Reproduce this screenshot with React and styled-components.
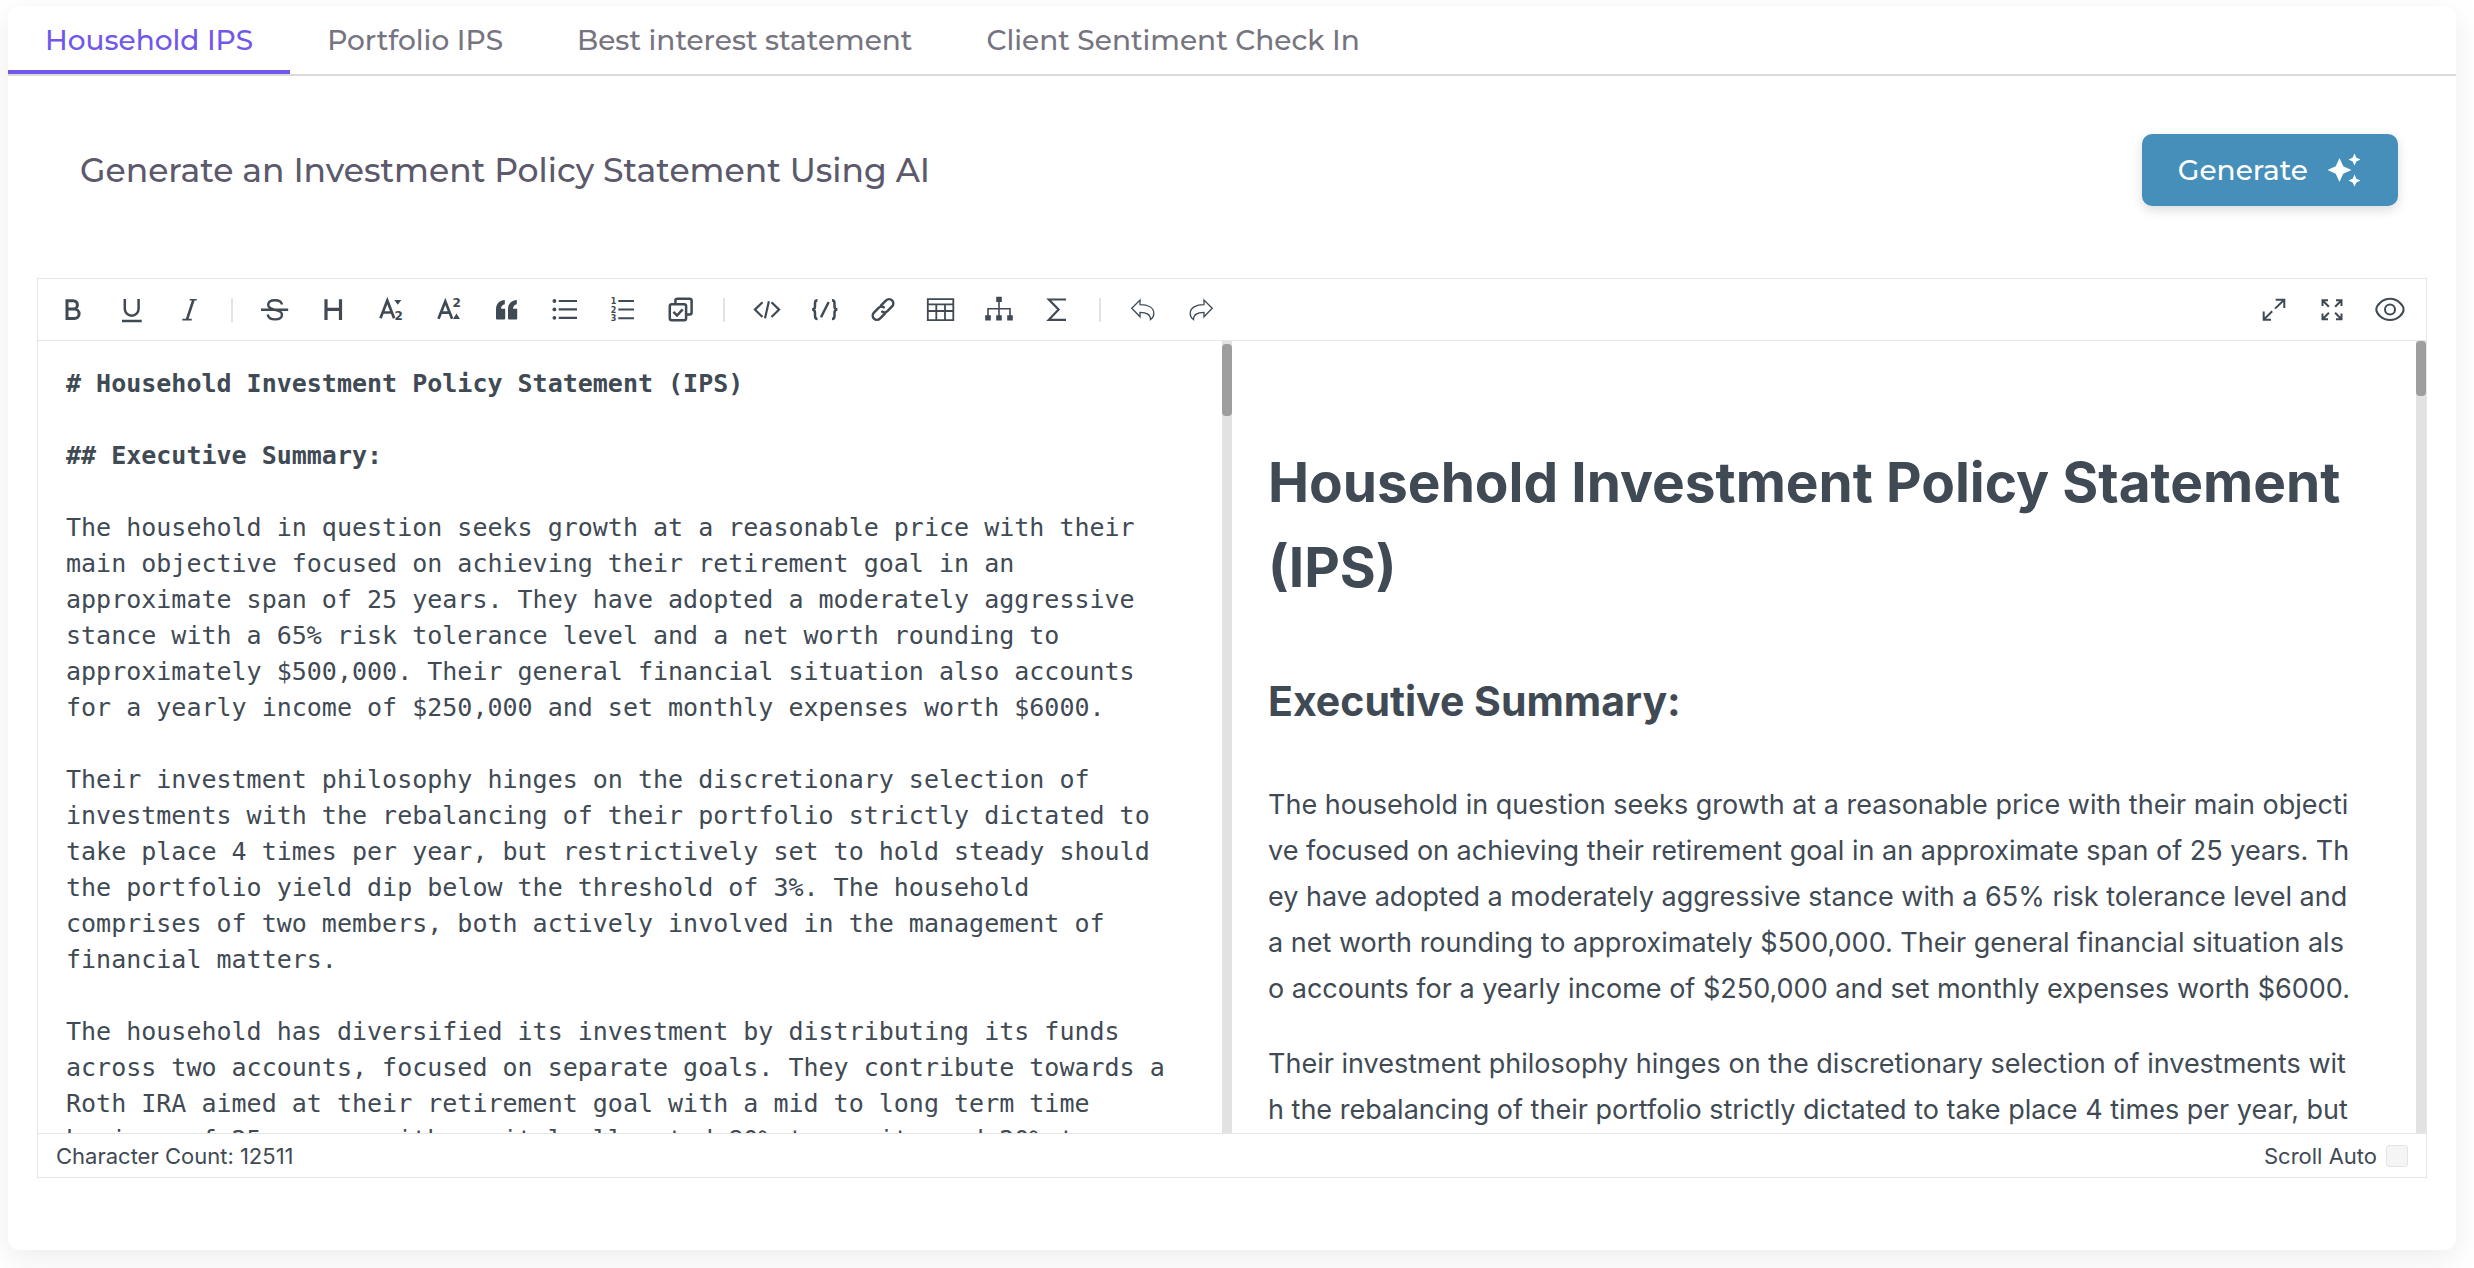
import React, { useState } from "react";
import styled, { createGlobalStyle } from "styled-components";

const brandFont = `"Montserrat", "DejaVu Sans", sans-serif`;
const uiFont = `"Inter", "Liberation Sans", sans-serif`;
const codeFont = `"DejaVu Sans Mono", "Liberation Mono", monospace`;

const color = {
  ink: "#3f4a54",
  line: "#e6e6e6",
  track: "#e2e2e2",
  thumb: "#9e9e9e",
  accent: "#7158ea",
  action: "#458fba",
};

const GlobalStyle = createGlobalStyle`
  * { box-sizing: border-box; }
  body { margin: 0; background: #ffffff; }
  button { font: inherit; color: inherit; background: none; border: 0; padding: 0; cursor: pointer; }
`;

const Page = styled.div`
  padding: 6px 18px 18px 8px;
  overflow: hidden;
`;

const Card = styled.main`
  background: #ffffff;
  border-radius: 12px;
  box-shadow: 0 8px 32px rgba(0, 0, 0, 0.08);
  padding-bottom: 72px;
`;

const Tabs = styled.div`
  display: flex;
  border-bottom: 2px solid #dbdbdb;
`;

const Tab = styled.button`
  && {
    height: 68px;
    padding: 4px 37px 0;
    font: 500 28px/36px ${brandFont};
    white-space: nowrap;
    color: ${(p) => (p.$active ? color.accent : "#76747f")};
    border-bottom: 4px solid ${(p) => (p.$active ? color.accent : "transparent")};
  }
`;

const Header = styled.header`
  display: flex;
  align-items: center;
  justify-content: space-between;
  padding: 58px 58px 72px 72px;
`;

const Title = styled.h1`
  margin: 0;
  font: 500 33px/48px ${brandFont};
  color: #5b596b;
`;

const GenerateButton = styled.button`
  && {
    display: flex;
    align-items: center;
    gap: 18px;
    height: 72px;
    padding: 0 36px;
    border-radius: 10px;
    background: ${color.action};
    color: #ffffff;
    font: 500 28px/36px ${brandFont};
    box-shadow: 0 4px 12px rgba(0, 0, 0, 0.14);
  }
`;

const Editor = styled.section`
  display: flex;
  flex-direction: column;
  height: 900px;
  margin: 0 29px;
  border: 1px solid ${color.line};
  color: ${color.ink};
`;

const Toolbar = styled.div`
  display: flex;
  justify-content: space-between;
  padding: 0 7px 0 6px;
  border-bottom: 1px solid ${color.line};
`;

const ToolGroup = styled.div`
  display: flex;
  align-items: center;
`;

const Tool = styled.button`
  display: grid;
  place-items: center;
  width: 58px;
  height: 61px;
`;

const Divider = styled.span`
  width: 2px;
  height: 24px;
  margin: 0 13px;
  background: #e3e3e3;
`;

const Panes = styled.div`
  flex: 1;
  min-height: 0;
  display: grid;
  grid-template-columns: 1fr 1fr;
`;

const Pane = styled.div`
  display: flex;
  min-width: 0;
  min-height: 0;
`;

const Source = styled.div`
  flex: 1;
  min-width: 0;
  overflow: hidden;
  padding: 25px 50px 0 28px;
  font: 400 25px/36px ${codeFont};
  white-space: pre-wrap;
  outline: none;
`;

const SourceLine = styled.div`
  min-height: 36px;
  margin-bottom: 36px;
  font-weight: ${(p) => (p.$heading ? 700 : 400)};
`;

const Track = styled.div`
  flex: none;
  width: 10px;
  padding-top: ${(p) => p.$inset}px;
  background: ${color.track};
`;

const Thumb = styled.div`
  height: ${(p) => p.$length}px;
  border-radius: 4px;
  background: ${color.thumb};
`;

const Preview = styled.article`
  flex: 1;
  min-width: 0;
  overflow: hidden;
  padding: 99px 65px 0 36px;
  font: 400 27px/46px ${uiFont};

  h1 {
    margin: 0 0 59px;
    font-size: 55px;
    line-height: 85px;
    font-weight: 700;
  }
  h2 {
    margin: 0 0 48px;
    font-size: 41px;
    line-height: 65px;
    font-weight: 700;
  }
  p {
    margin: 0 0 29px;
    word-break: break-all;
  }
`;

const Footer = styled.footer`
  display: flex;
  align-items: center;
  justify-content: space-between;
  height: 44px;
  padding: 0 18px;
  border-top: 1px solid ${color.line};
  font: 400 22px/32px ${uiFont};
`;

const ScrollAuto = styled.label`
  display: flex;
  align-items: center;
  gap: 9px;
`;

const Checkbox = styled.input`
  appearance: none;
  width: 22px;
  height: 22px;
  margin: 0;
  border: 1px solid #e4e4e4;
  border-radius: 3px;
  background: #f5f5f5;
`;

const IconSvg = styled.svg`
  display: block;
  fill: none;
  stroke: currentColor;
  stroke-width: ${(p) => p.$weight || 2};

  .solid {
    fill: currentColor;
    stroke: none;
  }
  text {
    fill: currentColor;
    stroke: none;
    font-family: "DejaVu Sans", sans-serif;
    font-weight: 700;
  }
`;

const Icon = ({ weight, children }) => (
  <IconSvg $weight={weight} width="32" height="32" viewBox="0 0 32 32" aria-hidden="true">
    {children}
  </IconSvg>
);

const icons = {
  bold: (
    <Icon weight={3}>
      <path d="M10 6.7h6.2a4.2 4.2 0 0 1 0 8.4H10zM10 15.1h7.4a4.7 4.7 0 0 1 0 9.4H10z" />
    </Icon>
  ),
  underline: (
    <Icon weight={2.5}>
      <path d="M9.8 5v9.8a6.9 6.9 0 0 0 13.8 0V5M7 26.9h19.7" />
    </Icon>
  ),
  italic: (
    <Icon weight={1.6}>
      <path d="M16.7 5.8h7M9.300 25.600h9.400" />
      <path strokeWidth="2.6" d="M20.400 6l-6.400 19.400" />
    </Icon>
  ),
  strike: (
    <Icon weight={2.4}>
      <path d="M2 15.700h27.200M23 10.400C22.300 7.400 19.800 6.200 16.200 6.200 12 6.200 9.200 8 9.200 10.800c0 2.700 2.300 4 6.800 5 5 1 7 2.500 7 5 0 3.100-2.800 4.600-6.800 4.600-4.300 0-7-1.600-7.500-4.900" />
    </Icon>
  ),
  heading: (
    <Icon weight={3.2}>
      <path d="M9 5.300V26M23.500 5.300V26M9 15.300h14.500" />
    </Icon>
  ),
  sub: (
    <Icon weight={2.7}>
      <path d="M5.500 24.300L12.300 6.500l6.800 17.800M7.800 18.500h9" />
      <path className="solid" d="M19.300 6h7l-3.500 4.700z" />
      <text x="19.500" y="26" fontSize="12">2</text>
    </Icon>
  ),
  sup: (
    <Icon weight={2.7}>
      <path d="M5.500 24.700L12.300 7.500l6.800 17.200M7.800 18.700h9" />
      <path className="solid" d="M20 25h7l-3.500-5.500z" />
      <text x="19.500" y="13.200" fontSize="12">2</text>
    </Icon>
  ),
  quote: (
    <Icon>
      <path className="solid" d="M5 24.500V15.500C5 10 8 6.400 13.800 6v4.200c-2.400.4-3.600 1.800-3.800 4.600h4.200v9.700a.9.900 0 0 1-.9.900H5.900a.9.900 0 0 1-.9-.9zM17 24.500V15.500C17 10 20 6.400 25.800 6v4.200c-2.400.4-3.600 1.800-3.800 4.600h4.200v9.700a.9.900 0 0 1-.9.900h-7.400a.9.900 0 0 1-.9-.9z" />
    </Icon>
  ),
  bullets: (
    <Icon weight={2.2}>
      <path d="M9.700 7h18.300M9.700 15.400h18.300M9.700 23.800h18.300" />
      <circle className="solid" cx="5.400" cy="7" r="1.900" />
      <circle className="solid" cx="5.400" cy="15.400" r="1.900" />
      <circle className="solid" cx="5.400" cy="23.800" r="1.900" />
    </Icon>
  ),
  numbers: (
    <Icon>
      <path d="M11.300 7H27M11.300 15.600H27M11.300 24.200H27" />
      <text x="3.800" y="10" fontSize="8">1</text>
      <text x="3.800" y="18.600" fontSize="8">2</text>
      <text x="3.800" y="27.200" fontSize="8">3</text>
    </Icon>
  ),
  task: (
    <Icon weight={2.5}>
      <rect x="4.800" y="10.300" width="16.300" height="16" rx="2" />
      <path d="M10.400 9.500V6.800a2 2 0 0 1 2-2h12.200a2 2 0 0 1 2 2v11.700a2 2 0 0 1-2 2H22" />
      <path d="M8.400 17.900l3.600 3.600 5.700-6.200" />
    </Icon>
  ),
  code: (
    <Icon weight={2.2}>
      <path d="M11.500 8.200L3.900 15.600l7.600 7.400M20.500 8.200l7.600 7.400-7.600 7.400M17.900 7.300L14 24.200" />
    </Icon>
  ),
  braces: (
    <Icon weight={2.5}>
      <path d="M8.500 6.300C6.300 6.300 6 7.300 6 9.200v3.300c0 2-.8 2.900-2.800 3.100 2 .2 2.800 1.100 2.800 3.100V22c0 2 .3 3 2.500 3M23 6.300c2.200 0 2.500 1 2.500 2.900v3.300c0 2 .8 2.900 2.800 3.100-2 .2-2.800 1.100-2.800 3.100V22c0 2-.3 3-2.500 3M19.700 8L12 23.300" />
    </Icon>
  ),
  link: (
    <Icon weight={2.5}>
      <g transform="translate(16 15.500) rotate(-45)" strokeLinecap="round">
        <path d="M1.500-4.200H8.600a4.200 4.200 0 0 1 0 8.400H2a4.200 4.200 0 0 1-4.100-3.200" />
        <path d="M-1.500 4.200H-8.600a4.200 4.200 0 0 1 0-8.400H-2a4.200 4.200 0 0 1 4.100 3.200" />
      </g>
    </Icon>
  ),
  table: (
    <Icon weight={1.8}>
      <path d="M2.800 5.200h25.500v20.900H2.800zM2.800 10.300h25.500M2.800 17h25.500M11.300 10.300v15.800M20 10.300v15.800" />
    </Icon>
  ),
  diagram: (
    <Icon weight={1.6}>
      <path d="M16 7v15M5 22v-7.300h22V22" />
      <path className="solid" d="M13.200 2.700h5.600v5.200h-5.600zM2.200 21.300h5.600v5.200H2.200zM13.200 21.300h5.600v5.200h-5.600zM24.200 21.300h5.600v5.200h-5.600z" />
    </Icon>
  ),
  sigma: (
    <Icon weight={2.2}>
      <path d="M25 5.500H7.800L17.600 15.600 7.800 25.800H25" />
    </Icon>
  ),
  undo: (
    <Icon weight={1.3}>
      <path d="M4.800 14.300L13 6v4.700c8 0 13.800 3 13.800 8.800 0 2.500-1.300 4.600-3.300 6.100 0-5-3.500-7.300-10.500-7.300v4.500z" />
    </Icon>
  ),
  redo: (
    <Icon weight={1.3}>
      <path d="M27.200 14.300L19 6v4.700c-8 0-13.800 3-13.800 8.800 0 2.500 1.300 4.600 3.300 6.100 0-5 3.500-7.300 10.500-7.300v4.500z" />
    </Icon>
  ),
  expand: (
    <Icon>
      <path d="M17.700 5.700h8.600v8.300M26 6l-9 8.600M13 25.700H5.700v-8.300M6 25.400l8.200-8.200" />
    </Icon>
  ),
  fullscreen: (
    <Icon>
      <path d="M12 6.300H6.500v5.800M6.700 6.500l6.200 6.200M20 6.300h5.500v5.800M25.300 6.500l-6.200 6.200M12 25.200H6.500v-5.800M6.700 25l6.200-6.200M20 25.200h5.500v-5.800M25.300 25l-6.200-6.200" />
    </Icon>
  ),
  eye: (
    <Icon>
      <path d="M2.300 15.400C2.300 11.500 8 4.800 16 4.800s13.600 6.700 13.600 10.600S24 26 16 26 2.300 19.300 2.300 15.400z" />
      <circle cx="16" cy="15.400" r="5" />
    </Icon>
  ),
};

const Sparkles = () => (
  <svg width="36" height="36" viewBox="0 0 24 24" fill="currentColor" aria-hidden="true">
    <path d="M19 9l1.250-2.750L23 5l-2.750-1.250L19 1l-1.250 2.750L15 5l2.750 1.250zM11.500 9.500L9 4 6.500 9.500 1 12l5.500 2.500L9 20l2.500-5.500L17 12zM19 15l-1.250 2.750L15 19l2.750 1.250L19 23l1.250-2.750L23 19l-2.750-1.250z" />
  </svg>
);

const toolGroups = [
  [["bold", "Bold"], ["underline", "Underline"], ["italic", "Italic"]],
  [
    ["strike", "Strikethrough"],
    ["heading", "Heading"],
    ["sub", "Subscript"],
    ["sup", "Superscript"],
    ["quote", "Quote"],
    ["bullets", "Unordered list"],
    ["numbers", "Ordered list"],
    ["task", "Task list"],
  ],
  [
    ["code", "Inline code"],
    ["braces", "Block-level code"],
    ["link", "Link"],
    ["table", "Table"],
    ["diagram", "Mermaid"],
    ["sigma", "Formula"],
  ],
  [["undo", "Undo"], ["redo", "Redo"]],
];

const viewTools = [
  ["expand", "Fullscreen in page"],
  ["fullscreen", "Fullscreen"],
  ["eye", "Preview"],
];

const tabs = ["Household IPS", "Portfolio IPS", "Best interest statement", "Client Sentiment Check In"];

const summary =
  "The household in question seeks growth at a reasonable price with their main objective focused on achieving their retirement goal in an approximate span of 25 years. They have adopted a moderately aggressive stance with a 65% risk tolerance level and a net worth rounding to approximately $500,000. Their general financial situation also accounts for a yearly income of $250,000 and set monthly expenses worth $6000.";
const philosophy =
  "Their investment philosophy hinges on the discretionary selection of investments with the rebalancing of their portfolio strictly dictated to take place 4 times per year, but restrictively set to hold steady should the portfolio yield dip below the threshold of 3%. The household comprises of two members, both actively involved in the management of financial matters.";
const accounts =
  "The household has diversified its investment by distributing its funds across two accounts, focused on separate goals. They contribute towards a Roth IRA aimed at their retirement goal with a mid to long term time horizon of 25 years, with capital allocated 80% to equity and 20% to";

const ToolButton = ({ tool: [name, label] }) => (
  <Tool type="button" aria-label={label}>
    {icons[name]}
  </Tool>
);

export default function App() {
  const [active, setActive] = useState(0);

  return (
    <Page>
      <GlobalStyle />
      <Card>
        <Tabs role="tablist">
          {tabs.map((label, i) => (
            <Tab key={label} type="button" role="tab" aria-selected={i === active} $active={i === active} onClick={() => setActive(i)}>
              {label}
            </Tab>
          ))}
        </Tabs>

        <Header>
          <Title>Generate an Investment Policy Statement Using AI</Title>
          <GenerateButton type="button">
            Generate
            <Sparkles />
          </GenerateButton>
        </Header>

        <Editor>
          <Toolbar role="toolbar">
            <ToolGroup>
              {toolGroups.map((group, i) => (
                <React.Fragment key={i}>
                  {i > 0 && <Divider />}
                  {group.map((tool) => (
                    <ToolButton key={tool[0]} tool={tool} />
                  ))}
                </React.Fragment>
              ))}
            </ToolGroup>
            <ToolGroup>
              {viewTools.map((tool) => (
                <ToolButton key={tool[0]} tool={tool} />
              ))}
            </ToolGroup>
          </Toolbar>

          <Panes>
            <Pane>
              <Source role="textbox" aria-multiline="true" aria-label="Markdown source" contentEditable suppressContentEditableWarning spellCheck={false}>
                <SourceLine $heading># Household Investment Policy Statement (IPS)</SourceLine>
                <SourceLine $heading>## Executive Summary:</SourceLine>
                <SourceLine>{summary}</SourceLine>
                <SourceLine>{philosophy}</SourceLine>
                <SourceLine>{accounts}</SourceLine>
              </Source>
              <Track $inset={3}>
                <Thumb $length={72} />
              </Track>
            </Pane>
            <Pane>
              <Preview>
                <h1>Household Investment Policy Statement (IPS)</h1>
                <h2>Executive Summary:</h2>
                <p>{summary}</p>
                <p>{philosophy}</p>
              </Preview>
              <Track $inset={0}>
                <Thumb $length={55} />
              </Track>
            </Pane>
          </Panes>

          <Footer>
            <span>Character Count: 12511</span>
            <ScrollAuto>
              Scroll Auto
              <Checkbox type="checkbox" />
            </ScrollAuto>
          </Footer>
        </Editor>
      </Card>
    </Page>
  );
}
